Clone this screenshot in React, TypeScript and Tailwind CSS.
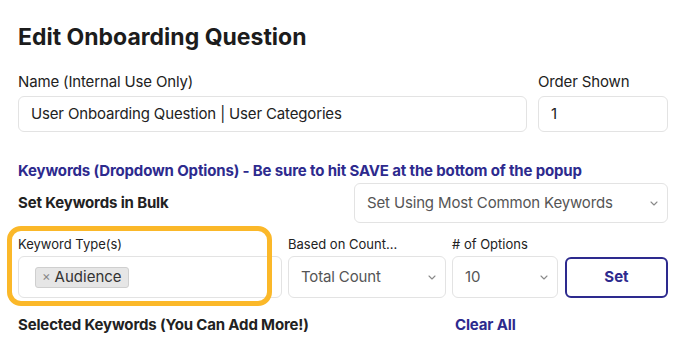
import { ReactNode } from 'react';

const font = { fontFamily: 'Inter, "Noto Sans", sans-serif' };

function Chevron() {
  return (
    <svg width="8" height="5" viewBox="0 0 8 5" className="shrink-0">
      <path d="M1 1l3 3 3-3" fill="none" stroke="#8a8a8a" strokeWidth="1.1" strokeLinecap="round" strokeLinejoin="round" />
    </svg>
  );
}

function FakeSelect({ value, className }: { value: string; className: string }) {
  return (
    <div className={`flex items-center justify-between rounded-md border border-[#e3e3e3] bg-white pl-3 pr-[9px] text-[15px] tracking-[-0.01em] text-[#555] ${className}`}>
      <span>{value}</span>
      <Chevron />
    </div>
  );
}

function Label({ children, small }: { children: ReactNode; small?: boolean }) {
  return (
    <div className={small ? 'text-[13px] leading-[18px] text-[#222]' : 'text-[15px] leading-5 tracking-[-0.01em] text-[#222]'}>{children}</div>
  );
}

export default function App() {
  return (
    <div className="h-[342px] w-[688px] overflow-hidden bg-white pl-[18px] pt-[22px]" style={font}>
      <div className="w-[650px]">
        <h1 className="text-[23px] font-bold leading-[30px] text-[#1c1c1c]">Edit Onboarding Question</h1>

        <div className="mt-5 flex gap-[11px]">
          <div className="w-[509px]">
            <Label>Name (Internal Use Only)</Label>
            <div className="mt-1 flex h-9 items-center rounded-md border border-[#e3e3e3] px-3 text-[15px] tracking-[-0.01em] text-[#222]">
              User Onboarding Question | User Categories
            </div>
          </div>
          <div className="flex-1">
            <Label>Order Shown</Label>
            <div className="mt-1 flex h-9 items-center rounded-md border border-[#e3e3e3] px-3 text-[15px] text-[#222]">1</div>
          </div>
        </div>

        <div className="mt-[29px] text-[15px] font-bold leading-5 tracking-[-0.01em] text-[#2d2a8e]">
          Keywords (Dropdown Options) - Be sure to hit SAVE at the bottom of the popup
        </div>

        <div className="mt-0.5 flex items-center justify-between">
          <div className="text-[15px] font-bold leading-5 tracking-[-0.01em] text-[#222]">Set Keywords in Bulk</div>
          <FakeSelect value="Set Using Most Common Keywords" className="h-10 w-[314px]" />
        </div>

        <div className="mt-3 flex items-end gap-[6px]">
          <div className="relative w-[264px]">
            <Label small>Keyword Type(s)</Label>
            <div className="mt-[3px] flex h-[42px] items-center rounded-md border border-[#e3e3e3] px-4">
              <span className="flex h-[21px] items-center gap-1 rounded-[3px] border border-[#cfcfcf] bg-[#e6e6e6] px-1.5 text-[15px] text-[#333]">
                <span className="text-[13px] text-[#888]">×</span>
                Audience
              </span>
            </div>
            <div className="pointer-events-none absolute left-[-11px] top-[-9px] h-[80px] w-[265px] rounded-[14px] border-[5px] border-[#fbb829]" />
          </div>
          <div className="w-[158px]">
            <Label small>Based on Count...</Label>
            <FakeSelect value="Total Count" className="mt-[3px] h-[42px]" />
          </div>
          <div className="w-[106px]">
            <Label small>#  of Options</Label>
            <FakeSelect value="10" className="mt-[3px] h-[42px]" />
          </div>
          <button className="ml-px h-[41px] flex-1 rounded-md border-2 border-[#2d2a8e] text-[15px] font-bold text-[#2d2a8e]">Set</button>
        </div>

        <div className="mt-[17px] flex text-[15px] font-bold leading-5 tracking-[-0.01em]">
          <div className="w-[437px] text-[#222]">Selected Keywords (You Can Add More!)</div>
          <div className="text-[#2d2a8e]">Clear All</div>
        </div>
      </div>
    </div>
  );
}
